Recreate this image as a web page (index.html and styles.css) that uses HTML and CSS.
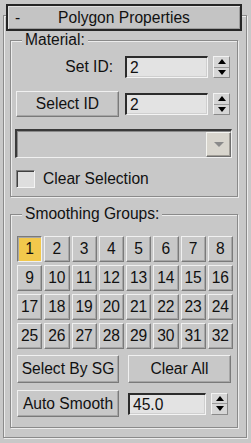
FILE: index.html
```html
<!DOCTYPE html>
<html>
<head>
<meta charset="utf-8">
<link rel="stylesheet" href="styles.css">
</head>
<body>
<div class="rollout">
  <div class="header"><span class="minus">-</span><span class="title">Polygon Properties</span><span></span></div>
  <div class="panel">
    <div class="group material">
      <div class="group-title">Material:</div>
      <div class="row row-first">
        <span class="label">Set ID:</span>
        <div class="field">2</div>
        <div class="spinner"><span class="spin-btn"><i class="tri-up"></i></span><span class="spin-btn"><i class="tri-down"></i></span></div>
      </div>
      <div class="row row-second">
        <button class="btn">Select ID</button>
        <div class="field">2</div>
        <div class="spinner"><span class="spin-btn"><i class="tri-up"></i></span><span class="spin-btn"><i class="tri-down"></i></span></div>
      </div>
      <div class="dropdown"><span class="dd-btn"><i class="tri-dd"></i></span></div>
      <div class="check"><span class="box"></span><span>Clear Selection</span></div>
    </div>
    <div class="group smoothing">
      <div class="group-title">Smoothing Groups:</div>
      <div class="sg-grid">
        <button class="sg on">1</button><button class="sg">2</button><button class="sg">3</button><button class="sg">4</button><button class="sg">5</button><button class="sg">6</button><button class="sg">7</button><button class="sg">8</button>
        <button class="sg">9</button><button class="sg">10</button><button class="sg">11</button><button class="sg">12</button><button class="sg">13</button><button class="sg">14</button><button class="sg">15</button><button class="sg">16</button>
        <button class="sg">17</button><button class="sg">18</button><button class="sg">19</button><button class="sg">20</button><button class="sg">21</button><button class="sg">22</button><button class="sg">23</button><button class="sg">24</button>
        <button class="sg">25</button><button class="sg">26</button><button class="sg">27</button><button class="sg">28</button><button class="sg">29</button><button class="sg">30</button><button class="sg">31</button><button class="sg">32</button>
      </div>
      <div class="btn-row">
        <button class="btn">Select By SG</button>
        <button class="btn">Clear All</button>
      </div>
      <div class="auto-row">
        <button class="btn">Auto Smooth</button>
        <div class="field">45.0</div>
        <div class="spinner"><span class="spin-btn"><i class="tri-up"></i></span><span class="spin-btn"><i class="tri-down"></i></span></div>
      </div>
    </div>
  </div>
</div>
</body>
</html>
```
FILE: styles.css
```css
html, body {
  margin: 0;
  background: #c8c8c8;
}
body {
  width: 251px;
  height: 443px;
  overflow: hidden;
  font-family: "Liberation Sans", Arial, sans-serif;
  font-size: 15.6px;
  color: #111;
}
.rollout {
  padding: 4px 4px 4px 3px;
}
.header {
  position: relative;
  z-index: 1;
  margin: 0 5px 0 3px;
  height: 27px;
  box-sizing: border-box;
  border: 2px solid #262626;
  background: #c4c4c4;
  box-shadow: inset 1px 1px 0 #e2e2e2, inset -1px -1px 0 #9c9c9c;
  display: grid;
  grid-template-columns: 1fr auto 1fr;
  align-items: center;
  line-height: 18px;
}
.minus {
  padding-left: 7px;
}
.panel {
  margin-top: -16px;
  border: 1px solid #8a8a8a;
  box-shadow: inset 1px 1px 0 #ececec, 1px 1px 0 #ececec;
  padding: 24px 8px 9px 6px;
}
.group {
  border: 1px solid #8a8a8a;
  box-shadow: inset 1px 1px 0 #ececec, 1px 1px 0 #ececec;
}
.material {
  padding: 0 5px 8px 5px;
}
.smoothing {
  margin-top: 17px;
  padding: 0 4px 10px 6px;
}
.group-title {
  margin: -10px 0 0 6px;
  width: fit-content;
  padding: 0 3px;
  background: #c8c8c8;
  line-height: 18px;
}
.smoothing .group-title {
  margin-left: 5px;
}
.row {
  display: grid;
  grid-template-columns: 103px 83px 17px;
  column-gap: 6px;
  align-items: center;
  height: 26px;
}
.row .spinner {
  margin-left: -1px;
}
.row-first {
  margin-top: 5px;
}
.row-second {
  margin-top: 11px;
}
.label {
  text-align: right;
  padding-right: 6px;
}
.btn {
  font: inherit;
  color: inherit;
  background: #c8c8c8;
  border: 1px solid;
  border-color: #f0f0f0 #7a7a7a #7a7a7a #f0f0f0;
  box-shadow: inset -1px -1px 0 #a6a6a6;
  padding: 0;
  margin: 0;
  height: 26px;
  line-height: 20px;
}
.field {
  box-sizing: border-box;
  height: 22px;
  background: #e3e3e3;
  border-style: solid;
  border-width: 2px 1px 1px 2px;
  border-color: #2c2c2c #f4f4f4 #f4f4f4 #2c2c2c;
  box-shadow: inset -1px -1px 0 #cfcfcf;
  padding-left: 3px;
  line-height: 19px;
}
.spinner {
  box-sizing: border-box;
  height: 22px;
  width: 17px;
  display: flex;
  flex-direction: column;
  border: 1px solid;
  border-color: #f2f2f2 #8a8a8a #8a8a8a #f2f2f2;
  background: #d6d6d6;
}
.spin-btn {
  flex: 1;
  display: flex;
  align-items: center;
  justify-content: center;
}
.spin-btn + .spin-btn {
  border-top: 1px solid #9a9a9a;
}
.tri-up, .tri-down, .tri-dd {
  display: block;
  width: 0;
  height: 0;
  border-left: 4px solid transparent;
  border-right: 4px solid transparent;
}
.tri-up {
  border-bottom: 5px solid #000;
}
.tri-down {
  border-top: 5px solid #000;
}
.dropdown {
  box-sizing: border-box;
  margin: 12px 0 0 -1px;
  height: 29px;
  border-style: solid;
  border-width: 2px 1px 1px 2px;
  border-color: #3a3a3a #f0f0f0 #f0f0f0 #3a3a3a;
  box-shadow: inset 1px 1px 0 #8a8a8a;
  padding: 1px 0 0 0;
  display: flex;
  justify-content: flex-end;
}
.dd-btn {
  box-sizing: border-box;
  width: 25px;
  height: 25px;
  background: #d8d5cd;
  border: 1px solid;
  border-color: #f4f4f0 #6e6e6e #6e6e6e #f4f4f0;
  box-shadow: inset -1px -1px 0 #a09d96;
  display: flex;
  align-items: center;
  justify-content: center;
}
.tri-dd {
  border-left-width: 5px;
  border-right-width: 5px;
  border-top: 5px solid #8a8a8a;
}
.check {
  margin-top: 12px;
  display: flex;
  align-items: center;
  gap: 8px;
  height: 18px;
}
.box {
  box-sizing: border-box;
  width: 19px;
  height: 18px;
  background: #dedede;
  border: 1px solid;
  border-color: #808080 #f4f4f4 #f4f4f4 #808080;
  box-shadow: inset 1px 1px 0 #404040;
}
.sg-grid {
  margin-top: 13px;
  display: grid;
  grid-template-columns: repeat(8, 1fr);
  grid-auto-rows: 26px;
  gap: 3px 2px;
}
.sg {
  font: inherit;
  color: inherit;
  background: #c8c8c8;
  border: 1px solid;
  border-color: #f0f0f0 #7a7a7a #7a7a7a #f0f0f0;
  box-shadow: inset -1px -1px 0 #a6a6a6;
  padding: 0;
  margin: 0;
  line-height: 20px;
}
.sg.on {
  background: #f2c84c;
  border-color: #7a7a7a #f0f0f0 #f0f0f0 #7a7a7a;
  box-shadow: inset 1px 1px 0 #a6a6a6;
}
.btn-row {
  margin-top: 6px;
  display: grid;
  grid-template-columns: 102px 103px;
  column-gap: 9px;
}
.btn-row .btn {
  height: 28px;
}
.auto-row {
  margin-top: 7px;
  display: grid;
  grid-template-columns: 102px 78px 17px;
  column-gap: 9px;
  align-items: center;
  height: 27px;
}
.auto-row .btn {
  height: 27px;
}
.auto-row .spinner {
  margin-left: -4px;
}
```
